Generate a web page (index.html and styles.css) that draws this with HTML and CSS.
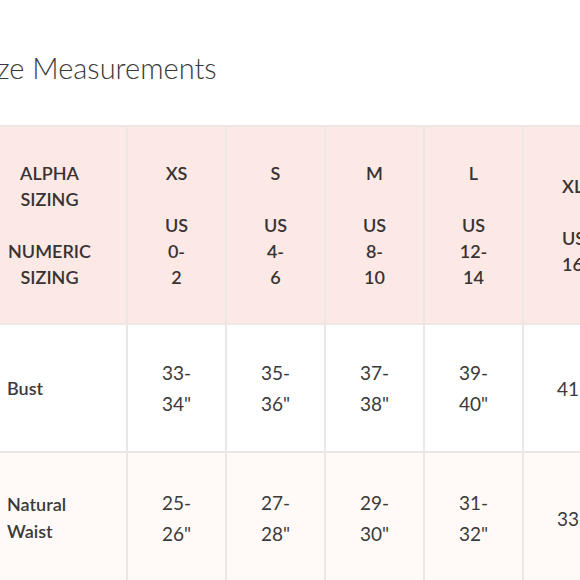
FILE: index.html
```html
<!DOCTYPE html>
<html>
<head>
<meta charset="utf-8">
<link rel="stylesheet" href="styles.css">
</head>
<body>
<div class="page">
  <h1 class="title">Size Measurements</h1>
  <table class="sizes">
    <tr class="head">
      <th class="label">ALPHA<br>SIZING<br><br>NUMERIC<br>SIZING</th>
      <th>XS<br><br>US<br>0-<br>2</th>
      <th>S<br><br>US<br>4-<br>6</th>
      <th>M<br><br>US<br>8-<br>10</th>
      <th>L<br><br>US<br>12-<br>14</th>
      <th class="last">XL<br><br>US<br>16-18</th>
    </tr>
    <tr class="row odd">
      <td class="label">Bust</td>
      <td>33-<br>34"</td>
      <td>35-<br>36"</td>
      <td>37-<br>38"</td>
      <td>39-<br>40"</td>
      <td class="last">41-42"</td>
    </tr>
    <tr class="row even">
      <td class="label">Natural<br>Waist</td>
      <td>25-<br>26"</td>
      <td>27-<br>28"</td>
      <td>29-<br>30"</td>
      <td>31-<br>32"</td>
      <td class="last">33-34"</td>
    </tr>
  </table>
</div>
</body>
</html>
```
FILE: styles.css
```css
html, body {
  margin: 0;
  padding: 0;
  background: #ffffff;
  overflow: hidden;
}
.page {
  margin-left: -29px;
  width: 760px;
  padding-top: 50px;
  font-family: Lato, "Liberation Sans", sans-serif;
  color: #333333;
}
.title {
  margin: 0 0 39px 4px;
  font-size: 29px;
  line-height: 36px;
  font-weight: 300;
  color: #3a3a3a;
  white-space: nowrap;
}
.sizes {
  border-collapse: collapse;
  table-layout: fixed;
}
.sizes th, .sizes td {
  border: 2px solid #ece7e4;
  text-align: center;
  vertical-align: middle;
  padding: 0;
  width: 97px;
  white-space: nowrap;
}
.sizes .label {
  width: 153px;
}
.sizes .last {
  text-align: left;
  padding-left: 38px;
  width: 97px;
}
.sizes td.last {
  padding-left: 33px;
  width: 102px;
}
.head th {
  background: #fce9e5;
  height: 196px;
  font-size: 18px;
  line-height: 26px;
  font-weight: 600;
  color: #383332;
}
.row td {
  height: 126px;
  font-size: 19px;
  line-height: 31px;
  font-weight: 400;
  color: #3b3a3a;
}
.row td.label {
  text-align: left;
  padding-left: 34px;
  width: 119px;
  font-size: 18px;
  line-height: 27px;
  font-weight: 600;
}
.odd td { background: #ffffff; }
.even td { background: #fffaf8; height: 130px; }
```
